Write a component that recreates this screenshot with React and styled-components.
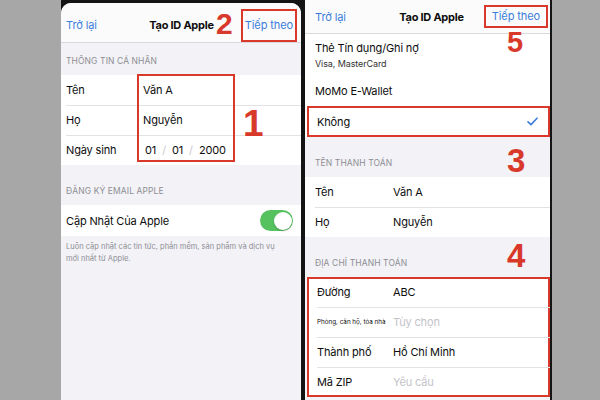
import React from "react";
import styled, { createGlobalStyle } from "styled-components";

const GlobalStyle = createGlobalStyle`
  html, body { margin: 0; padding: 0; }
  body {
    background: #a7a7a7;
    font-family: Inter, "Noto Sans", sans-serif;
    -webkit-font-smoothing: antialiased;
  }
`;

const RED = "#d8392a";
const BLUE = "#3a7ddb";

const Stage = styled.div`
  height: 400px;
  overflow: hidden;
  display: flex;
  padding-left: 61px;
  box-sizing: border-box;
`;

const Device = styled.div`
  display: flex;
  gap: 4px;
  background: #141414;
  padding-right: 2px;
  height: 400px;
`;

const Screen = styled.div`
  position: relative;
  width: ${(p) => p.$w}px;
  margin-top: ${(p) => p.$top || 0}px;
  border-radius: ${(p) => (p.$round ? "10px 10px 0 0" : "0")};
  background: #f2f2f7;
  overflow: hidden;
  display: flex;
  flex-direction: column;
  --inset: ${(p) => p.$inset}px;
`;

const NavBar = styled.div`
  height: ${(p) => p.$h}px;
  box-sizing: border-box;
  padding: ${(p) => p.$pt}px ${(p) => p.$pr}px 0 var(--inset);
  display: grid;
  grid-template-columns: 1fr auto 1fr;
  align-items: center;
  background: #fbfbfc;
  border-bottom: 1px solid #d9d9de;
  flex-shrink: 0;
`;

const BackLink = styled.span`
  color: ${BLUE};
  font-size: 11px;
  letter-spacing: -0.1px;
  justify-self: start;
`;

const Title = styled.span`
  font-size: 11px;
  font-weight: 700;
  color: #0d0d0d;
  letter-spacing: -0.25px;
`;

const NextButton = styled.span`
  justify-self: end;
  color: ${BLUE};
  font-size: 11px;
  letter-spacing: -0.1px;
  line-height: 15px;
  padding: ${(p) => p.$py}px ${(p) => p.$px}px;
  border: 2px solid ${RED};
`;

const SectionHead = styled.div`
  height: ${(p) => p.$h}px;
  box-sizing: border-box;
  display: flex;
  align-items: flex-end;
  padding: 0 var(--inset) 8px;
  font-size: 8.5px;
  line-height: 11px;
  color: #8e8e93;
  text-transform: uppercase;
  letter-spacing: 0.1px;
  flex-shrink: 0;
`;

const Group = styled.div`
  background: #fff;
  position: relative;
  outline: ${(p) => (p.$marked ? `2px solid ${RED}` : "none")};
  outline-offset: -2px;
  margin-left: ${(p) => (p.$marked ? 2 : 0)}px;
`;

const Row = styled.div`
  position: relative;
  height: ${(p) => p.$h || 30}px;
  box-sizing: border-box;
  display: flex;
  align-items: center;
  padding: 0 8px 0 var(--inset);
  font-size: 11px;
  letter-spacing: -0.15px;
  color: #0d0d0d;
  outline: ${(p) => (p.$marked ? `2px solid ${RED}` : "none")};
  outline-offset: -2px;
  margin-left: ${(p) => (p.$marked ? 2 : 0)}px;
  & + &::before {
    content: "";
    position: absolute;
    top: 0;
    right: 0;
    left: var(--inset);
    border-top: 1px solid #e2e2e6;
  }
`;

const Label = styled.span`
  width: ${(p) => p.$w}px;
  flex-shrink: 0;
  font-size: ${(p) => p.$size || 11}px;
  letter-spacing: ${(p) => (p.$size ? 0 : -0.15)}px;
`;

const Value = styled.span`
  color: ${(p) => (p.$muted ? "#c3c3c8" : "#0d0d0d")};
  flex: 1;
`;

const DateValue = styled.span`
  display: flex;
  gap: 6px;
  padding-left: 2px;
`;

const Slash = styled.span`
  color: #c9c9ce;
`;

const Stack = styled.div`
  display: flex;
  flex-direction: column;
  gap: 3px;
`;

const Sub = styled.span`
  font-size: 9px;
  letter-spacing: -0.1px;
  color: #333;
`;

const Toggle = styled.span`
  margin-left: auto;
  width: 33px;
  height: 21px;
  border-radius: 11px;
  background: #55c15f;
  display: flex;
  justify-content: flex-end;
  align-items: center;
  padding: 0 1.5px;
  box-sizing: border-box;
`;

const Knob = styled.span`
  width: 18px;
  height: 18px;
  border-radius: 50%;
  background: #fff;
  box-shadow: 0 1px 2px rgba(0, 0, 0, 0.2);
`;

const Footnote = styled.p`
  margin: 0;
  padding: 5px 0 0 var(--inset);
  font-size: 7.5px;
  line-height: 12px;
  color: #8e8e93;
  white-space: nowrap;
`;

const Check = styled.svg`
  margin-left: auto;
  margin-right: 4px;
`;

/* annotation layer drawn over the screens */
const StepNumber = styled.span`
  position: absolute;
  left: ${(p) => p.$x}px;
  top: ${(p) => p.$y}px;
  font-family: "Liberation Sans", Arial, sans-serif;
  font-weight: 700;
  font-size: ${(p) => p.$size}px;
  line-height: 1;
  color: ${RED};
`;

const FrameBox = styled.div`
  position: absolute;
  left: ${(p) => p.$x}px;
  top: ${(p) => p.$y}px;
  width: ${(p) => p.$w}px;
  height: ${(p) => p.$h}px;
  border: 2px solid ${RED};
  box-sizing: border-box;
  pointer-events: none;
`;

function LeftScreen() {
  return (
    <Screen $w={240} $top={3} $round $inset={5}>
      <NavBar $h={40} $pt={5} $pr={4}>
        <BackLink>Trở lại</BackLink>
        <Title>Tạo ID Apple</Title>
        <NextButton $py={7} $px={2}>Tiếp theo</NextButton>
      </NavBar>
      <SectionHead $h={32}>Thông tin cá nhân</SectionHead>
      <Group>
        <Row>
          <Label $w={77}>Tên</Label>
          <Value>Văn A</Value>
        </Row>
        <Row>
          <Label $w={77}>Họ</Label>
          <Value>Nguyễn</Value>
        </Row>
        <Row>
          <Label $w={77}>Ngày sinh</Label>
          <DateValue>
            <span>01</span>
            <Slash>/</Slash>
            <span>01</span>
            <Slash>/</Slash>
            <span>2000</span>
          </DateValue>
        </Row>
      </Group>
      <SectionHead $h={40}>Đăng ký email Apple</SectionHead>
      <Group>
        <Row $h={31}>
          <span>Cập Nhật Của Apple</span>
          <Toggle>
            <Knob />
          </Toggle>
        </Row>
      </Group>
      <Footnote>
        Luôn cập nhật các tin tức, phần mềm, sản phẩm và dịch vụ
        <br />
        mới nhất từ Apple.
      </Footnote>

      <StepNumber $x={155} $y={6} $size={30}>2</StepNumber>
      <StepNumber $x={182} $y={102} $size={37}>1</StepNumber>
      <FrameBox $x={76} $y={71} $w={98} $h={88} />
    </Screen>
  );
}

function RightScreen() {
  return (
    <Screen $w={245} $inset={10}>
      <NavBar $h={34} $pt={0} $pr={2}>
        <BackLink>Trở lại</BackLink>
        <Title>Tạo ID Apple</Title>
        <NextButton $py={2} $px={6}>Tiếp theo</NextButton>
      </NavBar>
      <Group>
        <Row $h={42}>
          <Stack>
            <span>Thẻ Tín dụng/Ghi nợ</span>
            <Sub>Visa, MasterCard</Sub>
          </Stack>
        </Row>
        <Row>
          <span>MoMo E-Wallet</span>
        </Row>
        <Row $h={31} $marked>
          <span>Không</span>
          <Check width="11" height="9" viewBox="0 0 11 9">
            <polyline
              points="1,4.8 4,7.6 10,1.2"
              fill="none"
              stroke={BLUE}
              strokeWidth="1.6"
              strokeLinecap="round"
              strokeLinejoin="round"
            />
          </Check>
        </Row>
      </Group>
      <SectionHead $h={40}>Tên thanh toán</SectionHead>
      <Group>
        <Row>
          <Label $w={78}>Tên</Label>
          <Value>Văn A</Value>
        </Row>
        <Row>
          <Label $w={78}>Họ</Label>
          <Value>Nguyễn</Value>
        </Row>
      </Group>
      <SectionHead $h={40}>Địa chỉ thanh toán</SectionHead>
      <Group $marked>
        <Row>
          <Label $w={76}>Đường</Label>
          <Value>ABC</Value>
        </Row>
        <Row>
          <Label $w={76} $size={6.3}>Phòng, căn hộ, tòa nhà</Label>
          <Value $muted>Tùy chọn</Value>
        </Row>
        <Row>
          <Label $w={76}>Thành phố</Label>
          <Value>Hồ Chí Minh</Value>
        </Row>
        <Row>
          <Label $w={76}>Mã ZIP</Label>
          <Value $muted>Yêu cầu</Value>
        </Row>
      </Group>

      <StepNumber $x={202} $y={28} $size={29}>5</StepNumber>
      <StepNumber $x={202} $y={144} $size={33}>3</StepNumber>
      <StepNumber $x={202} $y={239} $size={33}>4</StepNumber>
    </Screen>
  );
}

export default function App() {
  return (
    <>
      <GlobalStyle />
      <Stage>
        <Device>
          <LeftScreen />
          <RightScreen />
        </Device>
      </Stage>
    </>
  );
}
